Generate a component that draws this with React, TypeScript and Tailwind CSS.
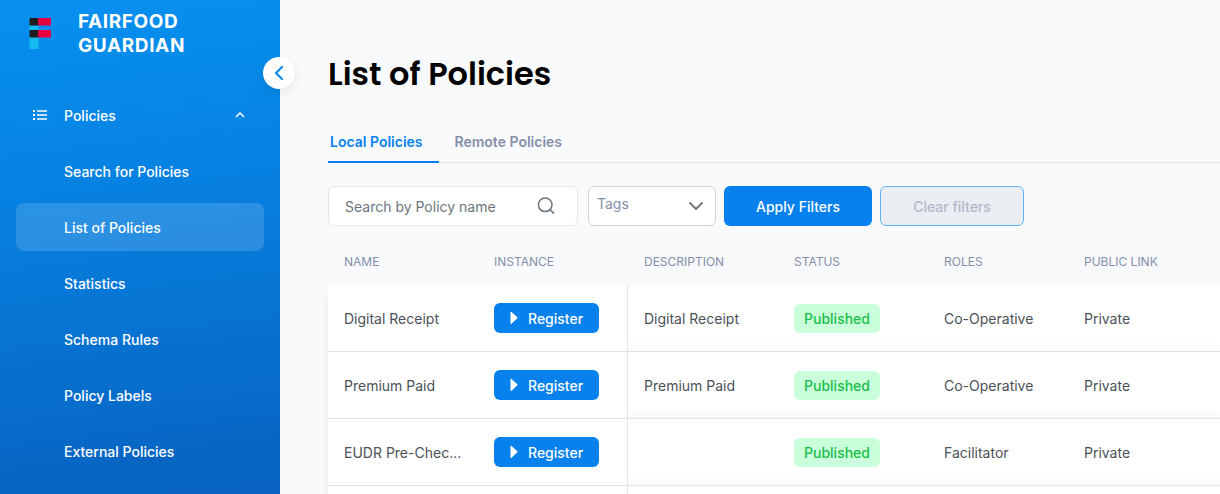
import React from "react";

const navItems = [
  { label: "Search for Policies", active: false },
  { label: "List of Policies", active: true },
  { label: "Statistics", active: false },
  { label: "Schema Rules", active: false },
  { label: "Policy Labels", active: false },
  { label: "External Policies", active: false },
];

const policies = [
  { name: "Digital Receipt", description: "Digital Receipt", role: "Co-Operative" },
  { name: "Premium Paid", description: "Premium Paid", role: "Co-Operative" },
  { name: "EUDR Pre-Chec...", description: "", role: "Facilitator" },
  { name: "", description: "", role: "" },
];

function Logo() {
  return (
    <svg width="24" height="33" viewBox="0 0 24 33">
      <rect x="1.5" y="1" width="9" height="31" fill="#14bcf2" />
      <rect x="1.5" y="1" width="9" height="7.5" fill="#1d1d1f" />
      <rect x="10" y="1" width="13" height="7.5" fill="#e4003f" />
      <rect x="1.5" y="13" width="9" height="7.5" fill="#1d1d1f" />
      <rect x="10" y="13" width="13" height="7.5" fill="#e4003f" />
    </svg>
  );
}

function Sidebar() {
  return (
    <aside className="relative z-10 flex h-full w-[280px] shrink-0 flex-col bg-[linear-gradient(173deg,#0890f1_0%,#068ceb_12%,#0781e1_38%,#0761bf_100%)] text-white">
      <div className="flex h-[66px] items-start pl-7 pt-[9px]">
        <div className="mt-2 w-[50px]">
          <Logo />
        </div>
        <div className="pt-px text-[19px] font-bold leading-6 tracking-[0.6px]">
          FAIRFOOD
          <br />
          GUARDIAN
        </div>
      </div>
      <nav className="flex flex-col gap-2 px-4 pt-[25px] text-[14px] font-medium">
        <div className="flex h-12 items-center pl-4">
          <svg className="w-8" width="32" height="14" viewBox="0 0 32 14" fill="#fff">
            <path d="M1 2h2v2H1zM1 6h2v2H1zM1 10h2v2H1z" />
            <path d="M5 2.2h10v1.6H5zM5 6.2h10v1.6H5zM5 10.2h10v1.6H5z" />
          </svg>
          <span className="flex-1">Policies</span>
          <svg className="mr-[19px]" width="10" height="6" viewBox="0 0 10 6" fill="none" stroke="#fff" strokeWidth="1.5">
            <path d="M1 5l4-4 4 4" />
          </svg>
        </div>
        {navItems.map((item) => (
          <div
            key={item.label}
            className={
              item.active
                ? "flex h-12 items-center rounded-lg bg-white/15 pl-12"
                : "flex h-12 items-center pl-12"
            }
          >
            {item.label}
          </div>
        ))}
      </nav>
      <button className="absolute left-[263px] top-[57px] flex size-8 items-center justify-center rounded-full bg-white shadow-[0_4px_12px_rgba(0,0,0,0.08)]">
        <svg width="8" height="14" viewBox="0 0 8 14" fill="none" stroke="#0681ee" strokeWidth="2" strokeLinecap="round" strokeLinejoin="round">
          <path d="M7 1L1 7l6 6" />
        </svg>
      </button>
    </aside>
  );
}

function Filters() {
  return (
    <div className="mt-[23px] flex h-10 text-[14px]">
      <div className="flex w-[250px] items-center rounded-md border border-[#e1e7ef] bg-white pl-4 text-[#6c757d]">
        <span className="w-[192px]">Search by Policy name</span>
        <svg width="18" height="18" viewBox="0 0 18 18" fill="none" stroke="#6c757d" strokeWidth="1.5">
          <circle cx="8.2" cy="7.8" r="6.8" />
          <path d="M13 12.6L17 16.6" />
        </svg>
      </div>
      <div className="ml-2.5 flex w-32 justify-between rounded-md border border-[#ced4da] bg-white pl-2 pr-3 pt-1.5 text-[#848fa9]">
        <span>Tags</span>
        <svg className="mt-[9px]" width="14" height="9" viewBox="0 0 14 9" fill="none" stroke="#6c757d" strokeWidth="1.8" strokeLinecap="round" strokeLinejoin="round">
          <path d="M1 1l6 6 6-6" />
        </svg>
      </div>
      <button className="ml-2 w-[148px] rounded-md bg-[#0681ee] font-medium text-white">
        Apply Filters
      </button>
      <button className="ml-2 w-36 rounded-md border border-[#63b1f6] bg-[#eaedf2] font-medium text-[#b2b9ca]">
        Clear filters
      </button>
    </div>
  );
}

function RegisterButton() {
  return (
    <button className="flex h-[30px] w-[105px] items-center rounded-md bg-[#0681ee] pl-4 font-medium text-white">
      <svg className="mr-[10px]" width="8" height="14" viewBox="0 0 8 14" fill="#fff">
        <path d="M0.5 1.4Q0.5 0.2 1.5 0.9L7.1 6Q7.9 6.8 7.1 7.6L1.5 12.7Q0.5 13.4 0.5 12.2z" />
      </svg>
      <span>Register</span>
    </button>
  );
}

function PolicyTable() {
  return (
    <div className="mt-3 text-[14px] text-[#4a5158]">
      <div className="flex h-[47px] w-[900px] text-[12px] uppercase text-[#848fa9]">
        <div className="flex w-[300px] items-center pl-4">
          <span className="w-[150px]">Name</span>
          <span>Instance</span>
        </div>
        <div className="flex flex-1 items-center bg-[#f8f9fb] pl-4">
          <span className="w-[150px]">Description</span>
          <span className="w-[150px]">Status</span>
          <span className="w-[140px]">Roles</span>
          <span>Public link</span>
        </div>
      </div>
      <div className="w-[900px] shadow-[0_12px_12px_rgba(0,0,0,0.08)]">
        {policies.map((p, i) => (
          <div key={i} className="flex h-[67px]">
            <div className="flex w-[300px] items-center border-b border-r border-[#e1e3e8] bg-white pl-4">
              <span className="w-[150px]">{p.name}</span>
              {p.role && <RegisterButton />}
            </div>
            <div className="flex flex-1 items-center border-b border-[#e1e3e8] bg-[linear-gradient(180deg,#fff_0,#fff_56px,#f9f9f9_66px)] pl-4">
              <span className="w-[150px]">{p.description}</span>
              <span className="w-[150px]">
                {p.role && (
                  <span className="mt-px flex h-[29px] w-[86px] items-center justify-center rounded-md bg-[#caffdb] font-medium text-[#19be47]">
                    Published
                  </span>
                )}
              </span>
              <span className="w-[140px]">{p.role}</span>
              <span>{p.role && "Private"}</span>
            </div>
          </div>
        ))}
      </div>
    </div>
  );
}

export default function App() {
  return (
    <div className="flex h-[494px] w-[1220px] overflow-hidden bg-[#f9fafc] font-['Inter',sans-serif]">
      <Sidebar />
      <main className="min-w-0 flex-1 pl-12">
        <h1 className="mt-[50px] h-12 whitespace-nowrap font-['Poppins','Inter',sans-serif] text-[32px] font-semibold leading-[48px] text-black">
          List of Policies
        </h1>
        <div className="mt-[25px] flex h-10 border-b border-[#e1e3eb] text-[14px] font-semibold">
          <div className="-mb-px h-10 w-[111px] border-b-2 border-[#0681ee] pl-0.5 pt-2 text-[#0681ee]">
            Local Policies
          </div>
          <div className="pl-[15.5px] pt-2 text-[#848fa9]">Remote Policies</div>
        </div>
        <Filters />
        <PolicyTable />
      </main>
    </div>
  );
}
